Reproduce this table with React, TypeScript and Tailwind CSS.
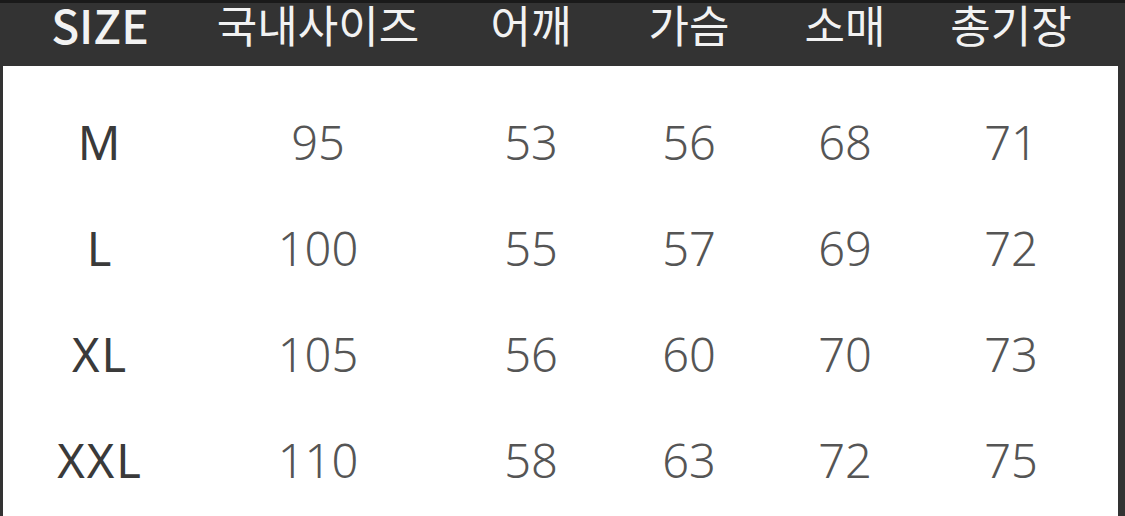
const headers = ["SIZE", "국내사이즈", "어깨", "가슴", "소매", "총기장"];

const rows = [
  ["M", "95", "53", "56", "68", "71"],
  ["L", "100", "55", "57", "69", "72"],
  ["XL", "105", "56", "60", "70", "73"],
  ["XXL", "110", "58", "63", "72", "75"],
];

const cols =
  "grid grid-cols-[200px_236px_190px_126px_186px_146px] justify-items-center";

export default function App() {
  return (
    <div
      className="w-[1125px] h-[516px] bg-[#333333] overflow-hidden flex flex-col"
      style={{ fontFamily: '"Noto Sans", "Noto Sans CJK KR", sans-serif' }}
    >
      <div className="h-[3px] bg-[#1a1a1a]" />
      <div className={`${cols} h-[63px] items-start text-[#f2f2f2]`}>
        {headers.map((h, i) => (
          <div
            key={h}
            className={`${i === 0 ? "text-[46px] font-medium" : "text-[44px] font-normal"} leading-[48px] relative -top-[3px]`}
            style={{ fontFamily: '"Noto Sans CJK KR", "Noto Sans", sans-serif' }}
          >
            {h}
          </div>
        ))}
      </div>
      <div className="flex-1 ml-[3px] mr-[7px] bg-white pt-[23px]">
        {rows.map((r) => (
          <div key={r[0]} className={`${cols} -ml-[3px] h-[106px] items-center`}>
            {r.map((c, i) => (
              <div
                key={i}
                className={`text-[47px] leading-none ${i === 0 ? "text-[#3a3a3a] tracking-[2px]" : "text-[#555555] font-light"}`}
              >
                {c}
              </div>
            ))}
          </div>
        ))}
      </div>
    </div>
  );
}
